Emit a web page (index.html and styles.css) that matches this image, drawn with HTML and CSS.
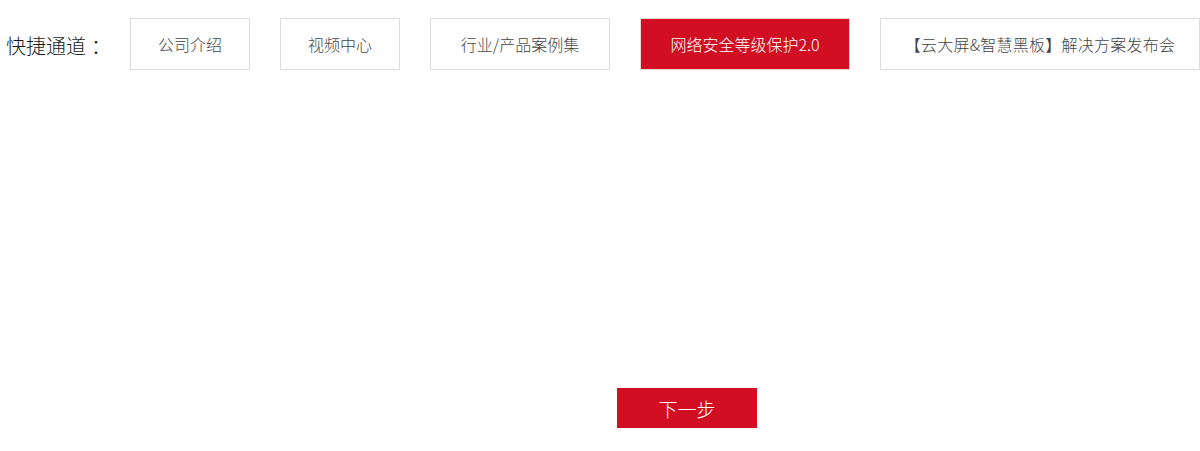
FILE: index.html
```html
<!DOCTYPE html>
<html lang="zh-CN">
<head>
<meta charset="utf-8">
<title>快捷通道</title>
<link rel="stylesheet" href="styles.css">
</head>
<body>
<div class="page">
  <div class="quick">
    <span class="quick-label">快捷通道<span class="colon">：</span></span>
    <a class="quick-item w120">公司介绍</a>
    <a class="quick-item w120">视频中心</a>
    <a class="quick-item w180">行业/产品案例集</a>
    <a class="quick-item w210 active">网络安全等级保护2.0</a>
    <a class="quick-item w320 wide">【云大屏&amp;智慧黑板】解决方案发布会</a>
  </div>
  <div class="content"></div>
  <div class="actions">
    <a class="next-btn">下一步</a>
  </div>
</div>
</body>
</html>
```
FILE: styles.css
```css
html, body {
  margin: 0;
  padding: 0;
  background: #fff;
}
body {
  font-family: "Noto Sans CJK SC", "Noto Sans", sans-serif;
  font-weight: 300;
}
.page {
  width: 1200px;
  height: 451px;
  padding-top: 18px;
  box-sizing: border-box;
}
.quick {
  display: flex;
  align-items: center;
  height: 52px;
}
.quick-label {
  width: 124px;
  padding-left: 6px;
  padding-top: 3px;
  font-size: 20px;
  color: #1a1a1a;
  line-height: 52px;
  white-space: nowrap;
}
.colon {
  margin-left: 5px;
}
.quick-item {
  box-sizing: border-box;
  height: 52px;
  border: 1px solid #dcdcdc;
  display: flex;
  align-items: center;
  justify-content: center;
  font-size: 16px;
  color: #444;
  margin-right: 30px;
  white-space: nowrap;
}
.quick-item:last-child { margin-right: 0; }
.w120 { width: 120px; }
.w180 { width: 180px; }
.w210 { width: 210px; }
.w320 { width: 320px; }
.wide { letter-spacing: 0.25px; }
.quick-item.active {
  background: #d10e22;
  border-color: #f1d4d7;
  color: #fff;
}
.content {
  height: 318px;
}
.actions {
  display: flex;
  padding-left: 617px;
}
.next-btn {
  width: 140px;
  height: 40px;
  background: #d10e22;
  color: #fff;
  font-size: 19px;
  display: flex;
  align-items: center;
  justify-content: center;
}
```
